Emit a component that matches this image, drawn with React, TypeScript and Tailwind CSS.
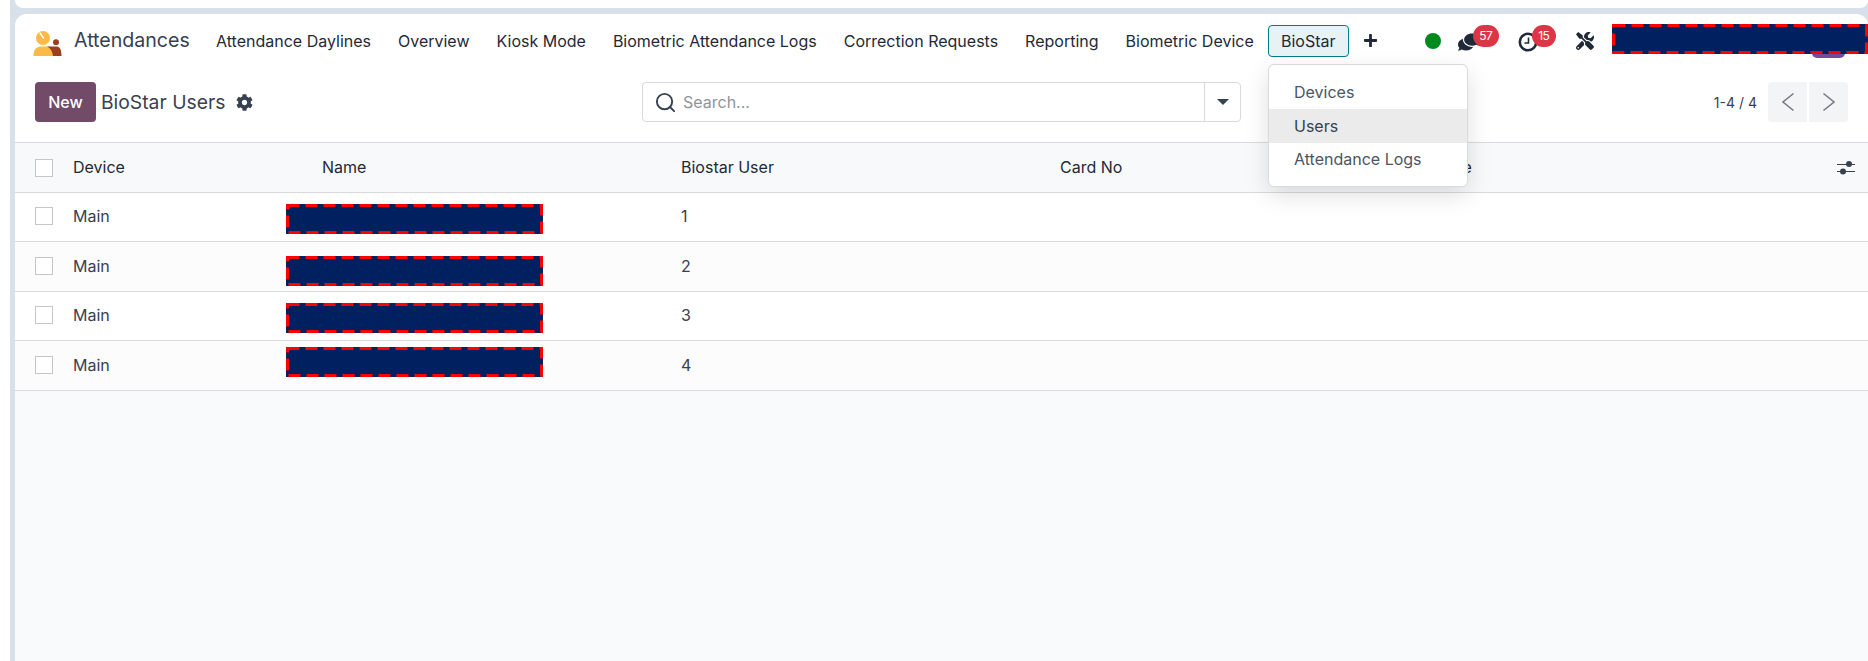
import React from "react";
import { Search } from "lucide-react";
import { FaCog, FaComments, FaPlus, FaTools } from "react-icons/fa";

const navItems = [
  "Attendance Daylines",
  "Overview",
  "Kiosk Mode",
  "Biometric Attendance Logs",
  "Correction Requests",
  "Reporting",
  "Biometric Device",
];

const rows = [
  { id: "1", stripe: "bg-white", h: "h-[49px]", nudge: "mt-[6px]" },
  { id: "2", stripe: "bg-[#fcfcfc]", h: "h-[50px]", nudge: "mt-[11px]" },
  { id: "3", stripe: "bg-white", h: "h-[49px]", nudge: "mt-[5px]" },
  { id: "4", stripe: "bg-[#fcfcfc]", h: "h-[50px]", nudge: "-mt-[6px]" },
];

const Redacted = ({ width, className }: { width: number; className?: string }) => (
  <svg width={width} height={30} className={`block ${className ?? ""}`}>
    <rect width={width} height={30} fill="#002060" />
    <rect
      x={1.5}
      y={1.5}
      width={width - 3}
      height={27}
      fill="none"
      stroke="#ff0000"
      strokeWidth={3}
      strokeDasharray="12 6"
    />
  </svg>
);

const Checkbox = () => <div className="w-[18px] h-[18px] border border-[#c4c6c9] bg-white" />;

const Badge = ({ value, className }: { value: string; className: string }) => (
  <span className={`absolute flex items-center justify-center h-[22px] rounded-full bg-[#dc3545] text-white text-[12px] tracking-[-0.5px] ${className}`}>
    {value}
  </span>
);

const Logo = () => (
  <svg width="30" height="27" viewBox="0 0 30 27" className="shrink-0">
    <circle cx="10" cy="8" r="7" fill="#fbb945" />
    <path d="M7 3 L10.5 8" stroke="#fff" strokeWidth="1.4" strokeLinecap="round" />
    <circle cx="23" cy="12.3" r="3" fill="#9c3f20" />
    <path d="M0.5 26 C0.5 20 3 16.5 8 16.5 H17 L22 26 Z" fill="#fbb945" />
    <path d="M14 16.5 H24 C27 16.5 28.5 20 28.5 26 H20 C19.5 22 18 18.5 14 16.5 Z" fill="#9c3f20" />
  </svg>
);

const SlidersIcon = () => (
  <svg width="18" height="16" viewBox="0 0 18 16" className="text-[#374151]">
    <path d="M0 4.5 H18 M0 11.5 H18" stroke="currentColor" strokeWidth="1" />
    <circle cx="12" cy="4" r="3" fill="currentColor" />
    <circle cx="6" cy="11.5" r="3" fill="currentColor" />
  </svg>
);

const ClockIcon = () => (
  <svg width="20" height="20" viewBox="0 0 20 20" className="text-[#1f2937]">
    <circle cx="10" cy="10" r="8.2" fill="none" stroke="currentColor" strokeWidth="2.6" />
    <path d="M10.5 5.5 V11 H6.5" fill="none" stroke="currentColor" strokeWidth="1.6" />
  </svg>
);

const Chevron = ({ points }: { points: string }) => (
  <svg width="14" height="20" viewBox="0 0 14 20" className="text-[#757b85]">
    <polyline points={points} fill="none" stroke="currentColor" strokeWidth="1.6" />
  </svg>
);

export default function App() {
  return (
    <div className="relative flex w-[1868px] h-[661px] overflow-hidden bg-white font-['Inter',sans-serif] text-[16px] text-[#1f2937]">
      <div className="w-[10px] shrink-0" />
      <div className="flex flex-col flex-1 bg-[#d8e1ea] pl-[5px]">
        <div className="h-[8px] shrink-0 bg-white rounded-b-[8px] mb-[6px]" />
        <div className="flex flex-col flex-1 bg-[#f9fafb] rounded-t-[12px] overflow-hidden">
          {/* navbar */}
          <div className="flex items-center h-[54px] shrink-0 bg-white">
            <div className="ml-[18px] mt-[4px]">
              <Logo />
            </div>
            <span className="ml-[11px] w-[115px] text-[19.6px] text-[#374151]">Attendances</span>
            <div className="flex items-center gap-[27px] ml-[27px]">
              {navItems.map((item) => (
                <span key={item} className="whitespace-nowrap">
                  {item}
                </span>
              ))}
            </div>
            <div className="flex items-center justify-center w-[81px] h-[32px] ml-[14px] mt-[-1px] shrink-0 rounded-[4px] border border-[#017e84] bg-[#e6f2f3]">
              BioStar
            </div>
            <FaPlus className="ml-[14px] mb-[2px] w-[15px] h-[15px] shrink-0 text-[#1f2937]" />
            <div className="ml-[47px] w-[16px] h-[16px] shrink-0 rounded-full bg-[#008a1e]" />
            <div className="relative ml-[17px] mt-[2px] shrink-0">
              <FaComments className="w-[22px] h-[20px] text-[#1f2937] -scale-x-100" />
              <Badge value="57" className="left-[15px] top-[-7px] w-[26px]" />
            </div>
            <div className="relative ml-[38px] mt-[2px] shrink-0">
              <ClockIcon />
              <Badge value="15" className="left-[14px] top-[-7px] w-[24px]" />
            </div>
            <FaTools className="ml-[38px] w-[18px] h-[18px] shrink-0 text-[#1f2937]" />
            <div className="relative ml-[18px] mt-[-4px] h-[30px] shrink-0">
              <div className="absolute left-[200px] top-[24px] w-[33px] h-[10px] rounded-b-[5px] bg-[#714b9f]" />
              <div className="relative">
                <Redacted width={256} />
              </div>
            </div>
          </div>

          {/* control panel */}
          <div className="flex items-center h-[74px] shrink-0 bg-white pl-[20px] pr-[20px] pb-[20px] pt-[14px]">
            <button className="w-[61px] h-[40px] rounded-[4px] bg-[#714b67] text-white text-[16px] font-medium">New</button>
            <span className="ml-[5px] w-[127px] text-[19.3px] text-[#374151] whitespace-nowrap">BioStar Users</span>
            <FaCog className="ml-[8px] w-[17px] h-[17px] text-[#374151]" />
            <div className="flex items-center ml-[389px] w-[599px] h-[40px] rounded-[4px] border border-[#d8dadd] bg-white">
              <Search className="ml-[11px] w-[23px] h-[23px] shrink-0 text-[#374151]" strokeWidth={2} />
              <span className="ml-[6px] flex-1 text-[#8f949b]">Search...</span>
              <div className="flex items-center justify-center w-[36px] h-full border-l border-[#d8dadd]">
                <div className="w-0 h-0 border-x-[6px] border-x-transparent border-t-[6px] border-t-[#374151]" />
              </div>
            </div>
            <span className="ml-auto text-[14px] text-[#374151] whitespace-nowrap">1-4 / 4</span>
            <div className="flex gap-[2px] ml-[11px]">
              <div className="flex items-center justify-center w-[39px] h-[40px] rounded-l-[4px] bg-[#f3f4f6]">
                <Chevron points="12.5,1.5 2,10 12.5,18.5" />
              </div>
              <div className="flex items-center justify-center w-[39px] h-[40px] rounded-r-[4px] bg-[#f3f4f6]">
                <Chevron points="1.5,1.5 12,10 1.5,18.5" />
              </div>
            </div>
          </div>

          {/* list */}
          <div className="grid grid-cols-[58px_213px_395px_379px_338px_1fr] items-center h-[51px] shrink-0 bg-[#f8f9fa] border-y border-[#d8dadd]">
            <div className="pl-[20px]">
              <Checkbox />
            </div>
            <span className="pb-[2px]">Device</span>
            <span className="pl-[36px] pb-[2px]">Name</span>
            <span className="pb-[2px]">Biostar User</span>
            <span className="pb-[2px]">Card No</span>
            <div className="flex items-center justify-between pr-[13px]">
              <span className="pb-[2px]">Employee</span>
              <SlidersIcon />
            </div>
          </div>
          {rows.map((row) => (
            <div
              key={row.id}
              className={`grid grid-cols-[58px_213px_395px_379px_338px_1fr] items-center ${row.h} shrink-0 pb-[2px] border-b border-[#d8dadd] text-[#374151] ${row.stripe}`}
            >
              <div className="pl-[20px]">
                <Checkbox />
              </div>
              <span>Main</span>
              <Redacted width={257} className={row.nudge} />
              <span>{row.id}</span>
              <span />
              <span />
            </div>
          ))}
        </div>
      </div>

      {/* BioStar dropdown, open over the page */}
      <div className="absolute left-[1268px] top-[64px] w-[200px] h-[123px] flex flex-col justify-center rounded-[6px] border border-[#d8dadd] bg-white text-[#4b5563] shadow-[0_8px_24px_rgba(0,0,0,0.13)]">
        <div className="flex items-center h-[33px] pl-[25px]">Devices</div>
        <div className="flex items-center h-[34px] pl-[25px] bg-[#ebebeb] text-[#374151]">Users</div>
        <div className="flex items-center h-[33px] pl-[25px]">Attendance Logs</div>
      </div>
    </div>
  );
}
